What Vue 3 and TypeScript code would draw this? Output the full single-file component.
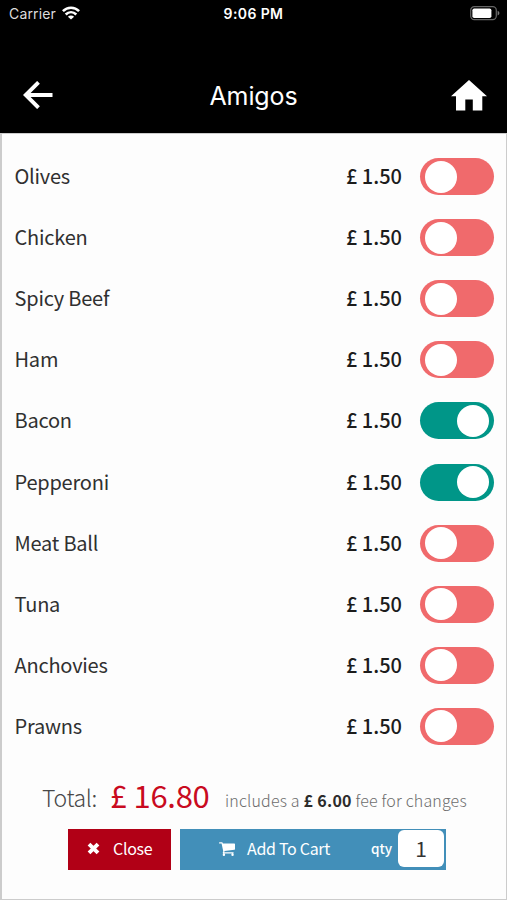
<script setup lang="ts">
import { ref } from 'vue'

interface Topping {
  name: string
  price: string
  selected: boolean
}

const toppings = ref<Topping[]>([
  { name: 'Olives', price: '1.50', selected: false },
  { name: 'Chicken', price: '1.50', selected: false },
  { name: 'Spicy Beef', price: '1.50', selected: false },
  { name: 'Ham', price: '1.50', selected: false },
  { name: 'Bacon', price: '1.50', selected: true },
  { name: 'Pepperoni', price: '1.50', selected: true },
  { name: 'Meat Ball', price: '1.50', selected: false },
  { name: 'Tuna', price: '1.50', selected: false },
  { name: 'Anchovies', price: '1.50', selected: false },
  { name: 'Prawns', price: '1.50', selected: false },
])
const quantity = ref('1')
</script>

<template>
  <div class="screen">
    <header class="header">
      <div class="status">
        <div class="carrier">
          <span>Carrier</span>
          <svg class="wifi" viewBox="0 0 18 14" width="18" height="14">
            <g fill="none" stroke="#fff" stroke-width="2.6">
              <path d="M0.9 5.2C5.4 0.5 12.6 0.5 17.1 5.2" />
              <path d="M3.7 8.5C6.8 5.4 11.2 5.4 14.3 8.5" />
            </g>
            <path d="M9 13.6L5.9 10.7C7.8 9.2 10.2 9.2 12.1 10.7Z" fill="#fff" />
          </svg>
        </div>
        <span class="time">9:06 PM</span>
        <svg class="battery" viewBox="0 0 30 15" width="30" height="15">
          <rect x="0.7" y="0.7" width="25.6" height="13" rx="3.6" fill="none" stroke="#666" stroke-width="1.2" />
          <rect x="2.4" y="2.4" width="19" height="9.6" rx="1.8" fill="#fff" />
          <path d="M27.6 4.8C30 5.8 30 8.6 27.6 9.6Z" fill="#777" />
        </svg>
      </div>
      <nav class="nav">
        <button class="icon-button back" aria-label="Back">
          <svg viewBox="0 0 30 28" width="30" height="28">
            <path d="M29.5 14H2.5M15.5 1.3L2.7 14L15.5 26.7" fill="none" stroke="#fff" stroke-width="3.9" />
          </svg>
        </button>
        <h1 class="title">Amigos</h1>
        <button class="icon-button home" aria-label="Home">
          <svg viewBox="0 0 36 31" width="36" height="31">
            <path d="M18 0L36 16.3H31.3V30.5H21.8V19.5H14.3V30.5H5V16.3H0Z" fill="#fff" />
          </svg>
        </button>
      </nav>
    </header>

    <main class="panel">
      <ul class="list">
        <li v-for="item in toppings" :key="item.name" class="row">
          <span class="name">{{ item.name }}</span>
          <span class="price">£ {{ item.price }}</span>
          <button
            class="toggle"
            :class="{ on: item.selected }"
            role="switch"
            :aria-checked="item.selected"
            @click="item.selected = !item.selected"
          >
            <span class="knob"></span>
          </button>
        </li>
      </ul>

      <div class="total">
        <span class="total-label">Total:</span>
        <span class="total-value">£ 16.80</span>
        <span class="note">includes a <b>£ 6.00</b> fee for changes</span>
      </div>

      <div class="actions">
        <button class="close">
          <svg viewBox="0 0 13 13" width="13" height="13">
            <path d="M2 2.2L11 10.8M11 2.2L2 10.8" stroke="#fff" stroke-width="3.9" />
          </svg>
          <span class="label">Close</span>
        </button>
        <div class="cart">
          <button class="add">
            <svg viewBox="0 0 1664 1536" width="16" height="15">
              <path
                fill="#fff"
                d="M640 1408a128 128 0 1 1-256 0 128 128 0 0 1 256 0zM1536 1408a128 128 0 1 1-256 0 128 128 0 0 1 256 0zM1664 320v512q0 24-16 42.500t-41 21.500l-1044 122q13 60 13 70 0 16-24 64h920q26 0 45 19t19 45-19 45-45 19H448q-26 0-45-19t-19-45q0-11 8-31.500t16-36 21.500-40 15.500-29.500L268 256H64q-26 0-45-19T0 192t19-45 45-19h256q16 0 28.500 6.500t19.500 15.500 13 24.500 8 26 5.500 29.500 4.500 26h1201q26 0 45 19t19 45z"
              />
            </svg>
            <span class="label">Add To Cart</span>
          </button>
          <span class="qty">qty</span>
          <input v-model="quantity" class="qty-input" aria-label="Quantity" />
        </div>
      </div>
    </main>
  </div>
</template>

<style>
body {
  margin: 0;
  background: #000;
}
</style>

<style scoped>
.screen {
  display: flex;
  flex-direction: column;
  width: 507px;
  height: 900px;
  overflow: hidden;
  background: #000;
  font-family: 'Noto Sans CJK SC', 'Noto Sans', sans-serif;
}
button,
input {
  margin: 0;
  padding: 0;
  border: 0;
  background: none;
  color: inherit;
  font: inherit;
}
svg {
  display: block;
}
.header {
  height: 133px;
  flex: none;
  color: #fff;
  font-family: Inter, sans-serif;
}
.status {
  display: grid;
  grid-template-columns: 1fr auto 1fr;
  align-items: center;
  height: 28px;
  padding: 0 9px 0 9px;
  font-size: 14px;
}
.carrier {
  display: flex;
  align-items: center;
  gap: 6px;
  color: #ddd;
  letter-spacing: 0.15px;
}
.carrier span,
.time {
  padding-bottom: 2px;
}
.wifi {
  margin-top: -2px;
}
.time {
  font-weight: 600;
  letter-spacing: 0.4px;
}
.battery {
  justify-self: end;
  margin: -1px -2px 0 0;
}
.nav {
  display: grid;
  grid-template-columns: 1fr auto 1fr;
  align-items: center;
  height: 72px;
  margin-top: 31px;
  padding: 0 20px 0 23px;
}
.back {
  justify-self: start;
}
.home {
  justify-self: end;
}
.title {
  margin: 0;
  padding: 2px 3px 0 0;
  font-size: 25px;
  line-height: 36px;
  font-weight: 400;
  letter-spacing: -0.1px;
}
.panel {
  flex: 1;
  box-sizing: border-box;
  border: solid #ccc;
  border-width: 1px 1px 1px 2px;
  background: #fdfdfd;
}
.list {
  margin: 0;
  padding: 12px 12px 0 12.5px;
  list-style: none;
}
.row {
  display: flex;
  align-items: center;
  height: 61.1px;
  color: #303030;
  font-size: 20px;
  line-height: 30px;
}
.name {
  flex: 1;
  padding-bottom: 1px;
  letter-spacing: -0.22px;
}
.price {
  margin-right: 18px;
  padding-bottom: 1px;
  color: #1c1c1c;
  font-weight: 500;
}
.toggle {
  display: flex;
  align-items: center;
  box-sizing: border-box;
  width: 74px;
  height: 37px;
  padding: 0 5px;
  border-radius: 19px;
  background: #f06a6c;
}
.toggle.on {
  justify-content: flex-end;
  background: #009688;
}
.knob {
  width: 32px;
  height: 32px;
  border-radius: 50%;
  background: #fff;
}
.total {
  display: flex;
  align-items: baseline;
  height: 44px;
  margin-top: 16px;
  padding-left: 40px;
  white-space: nowrap;
  line-height: 44px;
}
.total-label,
.note {
  position: relative;
  top: -1px;
}
.total-label {
  width: 68px;
  color: #484848;
  font-size: 23px;
  font-weight: 300;
  letter-spacing: -0.4px;
}
.total-value {
  width: 115px;
  color: #c90a20;
  font-size: 31px;
  letter-spacing: -0.3px;
}
.note {
  color: #6c6c6c;
  font-size: 16px;
  font-weight: 300;
  letter-spacing: 0.17px;
}
.note b {
  color: #2c2c2c;
  font-weight: 600;
  letter-spacing: 0.3px;
}
.actions {
  display: flex;
  gap: 9px;
  margin-top: 12px;
  padding-left: 66px;
  color: #fff;
  font-size: 16px;
}
.label {
  padding-bottom: 2px;
  letter-spacing: -0.3px;
}
.close svg,
.add svg {
  margin-top: -1px;
}
.close {
  display: flex;
  align-items: center;
  gap: 13px;
  box-sizing: border-box;
  width: 103px;
  height: 41px;
  padding-left: 19px;
  background: #b10016;
}
.cart {
  display: flex;
  align-items: center;
  box-sizing: border-box;
  width: 266px;
  height: 41px;
  padding: 0 2px 1px 39px;
  background: #428fb9;
}
.add {
  display: flex;
  align-items: center;
  gap: 12px;
  width: 152px;
  white-space: nowrap;
}
.qty {
  flex: 1;
  padding-bottom: 1px;
  font-size: 13.5px;
  font-weight: 500;
}
.qty-input {
  box-sizing: border-box;
  width: 46px;
  height: 37px;
  padding-bottom: 1px;
  border-radius: 6px;
  background: #fff;
  color: #333;
  font-size: 21px;
  text-align: center;
}
</style>
